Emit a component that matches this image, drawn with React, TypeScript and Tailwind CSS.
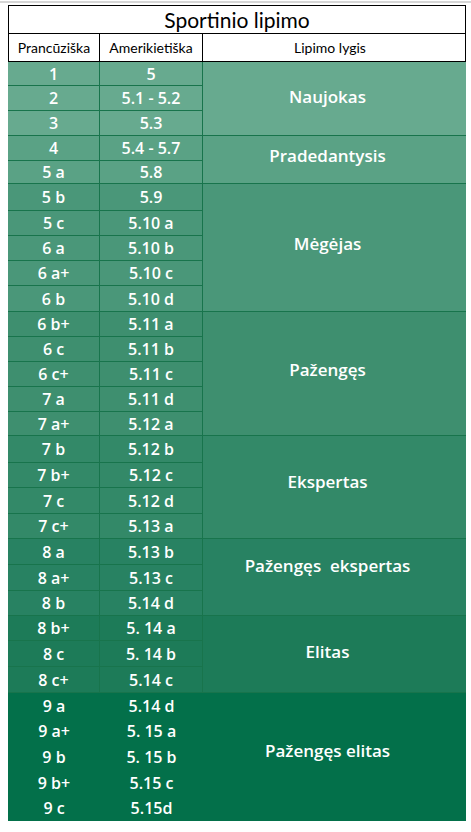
import React from 'react';

type Row = { fr: string; us: string; h: string };
type Group = { label: string; bg: string; pad: string; rows: Row[]; lines?: boolean };

// row heights include the row's own bottom line; the last row of a group leaves 1px for the group line
const groups: Group[] = [
  {
    label: 'Naujokas',
    bg: 'bg-[#67aa8f]',
    pad: 'pb-1',
    rows: [
      { fr: '1', us: '5', h: 'h-[24px]' },
      { fr: '2', us: '5.1 - 5.2', h: 'h-[25px]' },
      { fr: '3', us: '5.3', h: 'h-[24px]' },
    ],
  },
  {
    label: 'Pradedantysis',
    bg: 'bg-[#5aa285]',
    pad: 'pb-2',
    rows: [
      { fr: '4', us: '5.4 - 5.7', h: 'h-[25px]' },
      { fr: '5 a', us: '5.8', h: 'h-[22px]' },
    ],
  },
  {
    label: 'Mėgėjas',
    bg: 'bg-[#4a9779]',
    pad: 'pb-2',
    rows: [
      { fr: '5 b', us: '5.9', h: 'h-[27px]' },
      { fr: '5 c', us: '5.10 a', h: 'h-[25px]' },
      { fr: '6 a', us: '5.10 b', h: 'h-[25px]' },
      { fr: '6 a+', us: '5.10 c', h: 'h-[25px]' },
      { fr: '6 b', us: '5.10 d', h: 'h-[25px]' },
    ],
  },
  {
    label: 'Pažengęs',
    bg: 'bg-[#3e8f6f]',
    pad: 'pb-2',
    rows: [
      { fr: '6 b+', us: '5.11 a', h: 'h-[25px]' },
      { fr: '6 c', us: '5.11 b', h: 'h-[25px]' },
      { fr: '6 c+', us: '5.11 c', h: 'h-[25px]' },
      { fr: '7 a', us: '5.11 d', h: 'h-[25px]' },
      { fr: '7 a+', us: '5.12 a', h: 'h-[23px]' },
    ],
  },
  {
    label: 'Ekspertas',
    bg: 'bg-[#338968]',
    pad: 'pb-[10px]',
    rows: [
      { fr: '7 b', us: '5.12 b', h: 'h-[27px]' },
      { fr: '7 b+', us: '5.12 c', h: 'h-[25px]' },
      { fr: '7 c', us: '5.12 d', h: 'h-[26px]' },
      { fr: '7 c+', us: '5.13 a', h: 'h-[24px]' },
    ],
  },
  {
    label: 'Pažengęs  ekspertas',
    bg: 'bg-[#288262]',
    pad: 'pb-[22px]',
    rows: [
      { fr: '8 a', us: '5.13 b', h: 'h-[26px]' },
      { fr: '8 a+', us: '5.13 c', h: 'h-[26px]' },
      { fr: '8 b', us: '5.14 d', h: 'h-[24px]' },
    ],
  },
  {
    label: 'Elitas',
    bg: 'bg-[#1d7b58]',
    pad: 'pb-1',
    rows: [
      { fr: '8 b+', us: '5. 14 a', h: 'h-[25px]' },
      { fr: '8 c', us: '5. 14 b', h: 'h-[26px]' },
      { fr: '8 c+', us: '5.14 c', h: 'h-[25px]' },
    ],
  },
  {
    label: 'Pažengęs elitas',
    bg: 'bg-[#03704a]',
    pad: 'pb-3',
    lines: false,
    rows: [
      { fr: '9 a', us: '5.14 d', h: 'h-[25px]' },
      { fr: '9 a+', us: '5. 15 a', h: 'h-[26px]' },
      { fr: '9 b', us: '5. 15 b', h: 'h-[26px]' },
      { fr: '9 b+', us: '5.15 c', h: 'h-[25px]' },
      { fr: '9 c', us: '5.15d', h: 'h-[26px]' },
    ],
  },
];

const GradeGroup: React.FC<{ group: Group; last: boolean }> = ({ group, last }) => {
  const lines = group.lines !== false;
  return (
    <div className={`flex ${group.bg} ${last ? '' : 'border-b border-[#18744c]'}`}>
      <div className="flex flex-col">
        {group.rows.map((row, i) => (
          <div
            key={row.fr}
            className={`flex ${row.h} ${lines && i < group.rows.length - 1 ? 'border-b border-[#18744c]' : ''}`}
          >
            <div className={`w-[92px] flex items-center justify-center ${lines ? 'border-r border-[#18744c]' : ''}`}>
              {row.fr}
            </div>
            <div className={`w-[103px] flex items-center justify-center ${lines ? 'border-r border-[#18744c]' : ''}`}>
              {row.us}
            </div>
          </div>
        ))}
      </div>
      <div className={`flex-1 flex items-center justify-center pr-[14px] ${group.pad} text-[17px] whitespace-pre`}>
        {group.label}
      </div>
    </div>
  );
};

export default function App() {
  return (
    <div className="w-[471px] h-[832px] bg-white">
      <div className="h-[2px] mt-[1px] bg-[#d6d6d6]" />
      <div className="ml-[8px] mt-[2px] w-[458px]">
        <div
          className="border-[1.5px] border-black text-black"
          style={{ fontFamily: 'Lato, "Liberation Sans", sans-serif' }}
        >
          <div className="h-[28px] flex items-center justify-center text-[21px] border-b-[1.5px] border-black">
            Sportinio lipimo
          </div>
          <div className="h-[27px] flex text-[14px]">
            <div className="w-[91px] flex items-center justify-center border-r-[1.5px] border-black">Prancūziška</div>
            <div className="w-[103px] flex items-center justify-center border-r-[1.5px] border-black">Amerikietiška</div>
            <div className="flex-1 flex items-center justify-center pr-2">Lipimo lygis</div>
          </div>
        </div>
        <div
          className="text-white font-semibold text-[16px]"
          style={{ fontFamily: '"Open Sans", "Liberation Sans", sans-serif' }}
        >
          {groups.map((g, i) => (
            <GradeGroup key={g.label} group={g} last={i === groups.length - 1} />
          ))}
        </div>
      </div>
    </div>
  );
}
